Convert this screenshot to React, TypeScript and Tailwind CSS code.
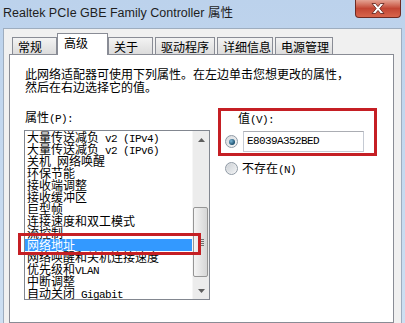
import React from "react";

type TabDef = { label: string; w: string; gap: string; active?: boolean };

const tabs: TabDef[] = [
  { label: "常规", w: "w-[45px]", gap: "" },
  { label: "高级", w: "w-[51px]", gap: "", active: true },
  { label: "关于", w: "w-[45px]", gap: "" },
  { label: "驱动程序", w: "w-[60px]", gap: "ml-[2px]" },
  { label: "详细信息", w: "w-[56px]", gap: "ml-[2px]" },
  { label: "电源管理", w: "w-[58px]", gap: "ml-[2px]" },
];

const items = [
  "大量传送减负 v2 (IPv4)",
  "大量传送减负 v2 (IPv6)",
  "关机 网络唤醒",
  "环保节能",
  "接收端调整",
  "接收缓冲区",
  "巨型帧",
  "连接速度和双工模式",
  "流控制",
  "网络地址",
  "网络唤醒和关机连接速度",
  "优先级和VLAN",
  "中断调整",
  "自动关闭 Gigabit",
];

// the original uses a bitmap font whose latin glyphs are half width,
// so ascii runs get a narrow mono face
function Mixed({ text }: { text: string }) {
  const parts = text.split(/([\x20-\x7e]+)/).filter(Boolean);
  return (
    <>
      {parts.map((p, i) =>
        /^[\x20-\x7e]+$/.test(p) ? (
          <span
            key={i}
            className="font-['Liberation_Mono',monospace] text-[11px] tracking-[-0.6px] whitespace-pre"
          >
            {p}
          </span>
        ) : (
          <span key={i}>{p}</span>
        )
      )}
    </>
  );
}

const Radio = ({ checked }: { checked?: boolean }) => (
  <div className="w-[13px] h-[13px] rounded-full border border-[#8f9aa5] bg-gradient-to-br from-[#d6d9dd] to-[#f7f7f7] flex items-center justify-center shrink-0">
    {checked ? (
      <div className="w-[6px] h-[6px] rounded-full bg-[radial-gradient(circle_at_35%_35%,#7ab6d6,#1b4f6e_70%)]" />
    ) : (
      <div className="w-[9px] h-[9px] rounded-full bg-gradient-to-br from-[#cfd3d7] to-[#eef0f2]" />
    )}
  </div>
);

const Arrow = ({ up }: { up?: boolean }) => (
  <div className="h-[17px] flex items-center justify-center">
    <svg width="7" height="4" viewBox="0 0 7 4">
      <path d={up ? "M0 4 L3.5 0 L7 4 Z" : "M0 0 L3.5 4 L7 0 Z"} fill="#5f5f5f" />
    </svg>
  </div>
);

export default function App() {
  return (
    <div className="relative w-[405px] h-[323px] overflow-hidden flex flex-col bg-gradient-to-b from-[#bcd2ec] to-[#cddff2] font-['Noto_Sans_CJK_SC',sans-serif] text-[12px] text-black">
      {/* title bar */}
      <div className="h-[28px] shrink-0 flex items-start justify-between">
        <div className="pl-[3px] pt-[5px] text-[12.5px] leading-[16px] font-['Liberation_Sans','Noto_Sans_CJK_SC',sans-serif] text-[#1e1e1e]">
          Realtek PCIe GBE Family Controller 属性
        </div>
        <div className="mr-[4px] w-[46px] h-[18px] rounded-b-[4px] border border-t-0 border-[#6e2a22] bg-gradient-to-b from-[#e4a394] via-[#c24634] to-[#d8654c] flex items-center justify-center">
          <svg width="14" height="11" viewBox="0 0 14 11">
            <path
              d="M1 0.5 H4.5 L7 3.6 L9.5 0.5 H13 L8.8 5.5 L13 10.5 H9.5 L7 7.4 L4.5 10.5 H1 L5.2 5.5 Z"
              fill="#ffffff"
              stroke="#5a1d16"
              strokeWidth="0.8"
            />
          </svg>
        </div>
      </div>

      {/* dialog body */}
      <div className="flex-1 mx-[3px] bg-[#f0f0f0] border-t border-x border-[#9eadbf] flex flex-col pl-[5px] pr-[7px] pt-[4px]">
        {/* tab strip */}
        <div className="h-[21px] shrink-0 flex items-end pl-[3px]">
          {tabs.map((t) =>
            t.active ? (
              <div
                key={t.label}
                className={`${t.w} h-[22px] -mb-px relative z-10 bg-white border border-b-0 border-[#898c95] pl-[6px] pt-[2px] leading-[13px]`}
              >
                {t.label}
              </div>
            ) : (
              <div
                key={t.label}
                className={`${t.w} ${t.gap} h-[17px] bg-gradient-to-b from-[#f3f3f3] to-[#dcdcdc] border border-b-0 border-[#898c95] pl-[5px] flex items-center leading-[13px]`}
              >
                {t.label}
              </div>
            )
          )}
        </div>

        {/* page */}
        <div className="flex-1 bg-white border border-[#898c95] pl-[14px] pt-[12px]">
          <div className="pl-[1px] leading-[13px] whitespace-nowrap">
            <div>此网络适配器可使用下列属性。在左边单击您想更改的属性，</div>
            <div>然后在右边选择它的值。</div>
          </div>

          <div className="mt-[15px] flex">
            {/* property list */}
            <div className="w-[186px] shrink-0 pt-[2px]">
              <div className="pl-[1px] leading-[13px] h-[13px]">
                <Mixed text="属性(P):" />
              </div>
              <div className="mt-[7px] h-[170px] border border-[#828790] bg-white flex">
                <div className="w-[167px] flex flex-col">
                  {items.map((it) => (
                    <div
                      key={it}
                      className={`h-[12px] leading-[12px] pl-[2px] whitespace-nowrap ${
                        it === "网络地址" ? "bg-[#3399ff] text-white" : ""
                      }`}
                    >
                      <Mixed text={it} />
                    </div>
                  ))}
                </div>
                <div className="w-[17px] bg-[#ececec] border-l border-[#f6f6f6] flex flex-col">
                  <Arrow up />
                  <div className="mt-[59px] w-[15px] h-[70px] rounded-[2px] border border-[#959595] bg-gradient-to-r from-[#f4f4f4] to-[#d6d6d6] flex flex-col items-center justify-center gap-[1px]">
                    <div className="w-[6px] h-px bg-[#6f6f6f]" />
                    <div className="w-[6px] h-px bg-[#6f6f6f]" />
                    <div className="w-[6px] h-px bg-[#6f6f6f]" />
                    <div className="w-[6px] h-px bg-[#6f6f6f]" />
                  </div>
                  <div className="flex-1" />
                  <Arrow />
                </div>
              </div>
            </div>

            {/* value */}
            <div className="pl-[15px]">
              <div className="pt-[3px] pl-[13px] leading-[13px]">
                <Mixed text="值(V):" />
              </div>
              <div className="mt-[4px] flex items-center">
                <Radio checked />
                <div className="ml-[5px] w-[121px] h-[21px] border border-[#c5cad3] border-t-[#abadb3] bg-white pl-[3px] flex items-center font-['Liberation_Mono',monospace] text-[11px] tracking-[-0.6px]">
                  E8039A352BED
                </div>
              </div>
              <div className="mt-[10px] h-[13px] flex items-center">
                <Radio />
                <div className="ml-[4px] leading-[13px]">
                  <Mixed text="不存在(N)" />
                </div>
              </div>
            </div>
          </div>
        </div>
      </div>

      {/* red annotation boxes */}
      <div className="absolute left-[218px] top-[108px] w-[159px] h-[48px] border-[3px] border-[#c51f24]" />
      <div className="absolute left-[18px] top-[233px] w-[183px] h-[22px] border-[3px] border-[#c51f24]" />
    </div>
  );
}
